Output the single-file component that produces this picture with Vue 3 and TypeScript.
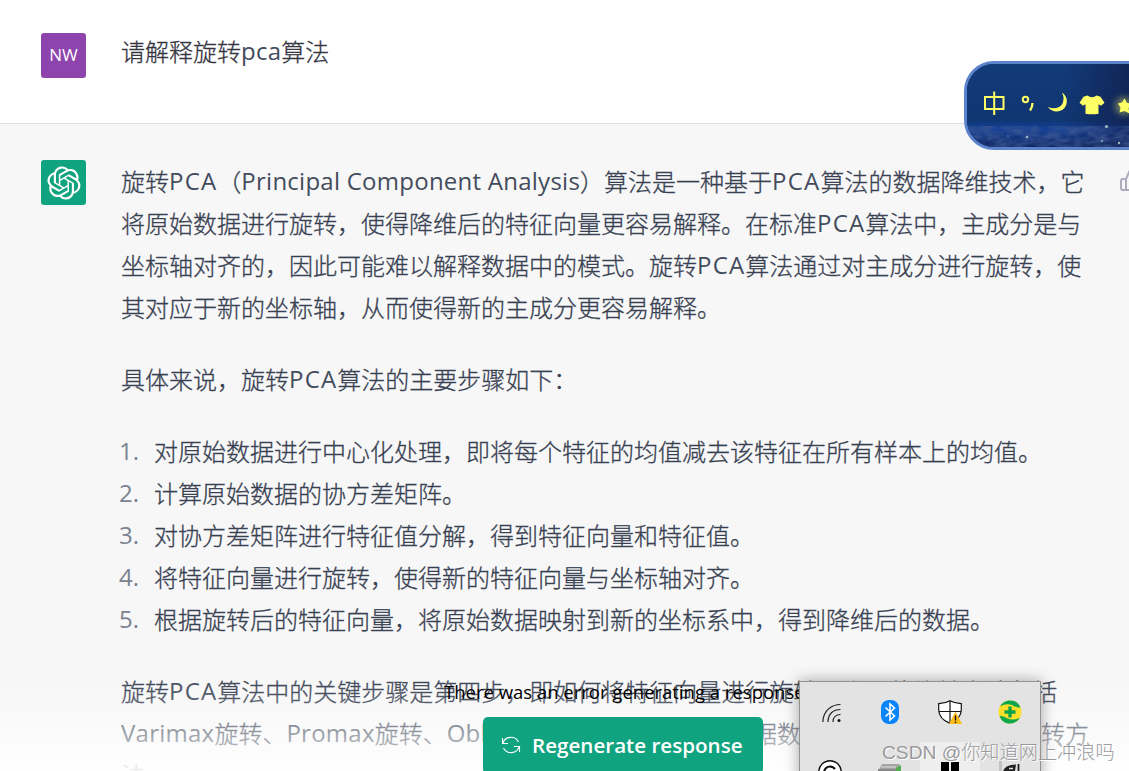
<script setup lang="ts">
interface Run { text: string; kind: string }

const kindOf = (text: string): string => {
  if (!/^[A-Za-z]/.test(text)) return 'han'
  return text === 'PCA' ? 'latin caps' : 'latin'
}

const split = (line: string): Run[] =>
  (line.match(/[A-Za-z][A-Za-z ]*|[^A-Za-z]+/g) ?? []).map((text) => ({ text, kind: kindOf(text) }))

const question = split('请解释旋转pca算法')
const intro = [
  '旋转PCA（Principal Component Analysis）算法是一种基于PCA算法的数据降维技术，它',
  '将原始数据进行旋转，使得降维后的特征向量更容易解释。在标准PCA算法中，主成分是与',
  '坐标轴对齐的，因此可能难以解释数据中的模式。旋转PCA算法通过对主成分进行旋转，使',
  '其对应于新的坐标轴，从而使得新的主成分更容易解释。',
].map(split)
const lead = ['具体来说，旋转PCA算法的主要步骤如下：'].map(split)
const closing = [
  '旋转PCA算法中的关键步骤是第四步，即如何将特征向量进行旋转。常见的旋转方法包括',
  'Varimax旋转、Promax旋转、Oblimin旋转等方法，可以根据数据的特点选择合适的旋转方',
  '法。',
].map(split)
const steps = [
  '对原始数据进行中心化处理，即将每个特征的均值减去该特征在所有样本上的均值。',
  '计算原始数据的协方差矩阵。',
  '对协方差矩阵进行特征值分解，得到特征向量和特征值。',
  '将特征向量进行旋转，使得新的特征向量与坐标轴对齐。',
  '根据旋转后的特征向量，将原始数据映射到新的坐标系中，得到降维后的数据。',
]
</script>

<template>
  <main class="page">
    <section class="row user">
      <div class="avatar purple">NW</div>
      <p class="line question">
        <span v-for="(r, i) in question" :key="i" :class="r.kind">{{ r.text }}</span>
      </p>
    </section>

    <section class="row bot">
      <div class="avatar green">
        <svg width="34" height="34" viewBox="0 0 41 41" fill="#fff">
          <path d="M37.532 16.87a9.963 9.963 0 0 0-.856-8.184 10.078 10.078 0 0 0-10.855-4.835A9.964 9.964 0 0 0 18.306.5a10.079 10.079 0 0 0-9.614 6.977 9.967 9.967 0 0 0-6.664 4.834 10.08 10.08 0 0 0 1.24 11.817 9.965 9.965 0 0 0 .856 8.185 10.079 10.079 0 0 0 10.855 4.835 9.965 9.965 0 0 0 7.516 3.35 10.078 10.078 0 0 0 9.617-6.981 9.967 9.967 0 0 0 6.663-4.834 10.079 10.079 0 0 0-1.243-11.813ZM22.498 37.886a7.474 7.474 0 0 1-4.799-1.735c.061-.033.168-.091.237-.134l7.964-4.6a1.294 1.294 0 0 0 .655-1.134V19.054l3.366 1.944a.12.12 0 0 1 .066.092v9.299a7.505 7.505 0 0 1-7.49 7.496ZM6.392 31.006a7.471 7.471 0 0 1-.894-5.023c.06.036.162.099.237.141l7.964 4.6a1.297 1.297 0 0 0 1.308 0l9.724-5.614v3.888a.12.12 0 0 1-.048.103l-8.051 4.649a7.504 7.504 0 0 1-10.24-2.744ZM4.297 13.62A7.469 7.469 0 0 1 8.2 10.333c0 .068-.004.19-.004.274v9.201a1.294 1.294 0 0 0 .654 1.132l9.723 5.614-3.366 1.944a.12.12 0 0 1-.114.01L7.04 23.856a7.504 7.504 0 0 1-2.743-10.237Zm27.658 6.437-9.724-5.615 3.367-1.943a.121.121 0 0 1 .113-.01l8.052 4.648a7.498 7.498 0 0 1-1.158 13.528v-9.476a1.293 1.293 0 0 0-.65-1.132Zm3.35-5.043c-.059-.037-.162-.099-.236-.141l-7.965-4.6a1.298 1.298 0 0 0-1.308 0l-9.723 5.614v-3.888a.12.12 0 0 1 .048-.103l8.05-4.645a7.497 7.497 0 0 1 11.135 7.763Zm-21.063 6.929-3.367-1.944a.12.12 0 0 1-.065-.092v-9.299a7.497 7.497 0 0 1 12.293-5.756 6.94 6.94 0 0 0-.236.134l-7.965 4.6a1.294 1.294 0 0 0-.654 1.132l-.006 11.225Zm1.829-3.943 4.33-2.501 4.332 2.5v5l-4.331 2.5-4.331-2.5V18Z" />
        </svg>
      </div>
      <div class="answer">
        <div class="para">
          <p v-for="(l, i) in intro" :key="i" class="line">
            <span v-for="(r, j) in l" :key="j" :class="r.kind">{{ r.text }}</span>
          </p>
        </div>
        <div class="para">
          <p v-for="(l, i) in lead" :key="i" class="line">
            <span v-for="(r, j) in l" :key="j" :class="r.kind">{{ r.text }}</span>
          </p>
        </div>
        <ol class="para steps">
          <li v-for="(s, i) in steps" :key="i" class="line">
            <span class="num">{{ i + 1 }}.</span><span class="han">{{ s }}</span>
          </li>
        </ol>
        <div class="para">
          <p v-for="(l, i) in closing" :key="i" class="line">
            <span v-for="(r, j) in l" :key="j" :class="r.kind">{{ r.text }}</span>
          </p>
        </div>
      </div>
      <svg class="thumb" width="24" height="24" viewBox="0 0 24 24" fill="none" stroke="#acacbe" stroke-width="2" stroke-linecap="round" stroke-linejoin="round">
        <path d="M14 9V5a3 3 0 0 0-3-3l-4 9v11h11.3a2 2 0 0 0 2-1.7l1.4-9a2 2 0 0 0-2-2.3zM7 22H4a2 2 0 0 1-2-2v-7a2 2 0 0 1 2-2h3" />
      </svg>
    </section>

    <div class="fade"></div>
    <p class="error">There was an error generating a response</p>
    <button class="regen">
      <svg width="20" height="20" viewBox="0 0 20 20" fill="none" stroke="#fff" stroke-width="1.1">
        <path d="M1.500 3v5.500h5.500M1.800 8.300A8.500 8.500 0 0 1 17.500 7M18.500 17v-5.500H13M18.200 11.700A8.500 8.500 0 0 1 2.500 13" />
      </svg>
      <span>Regenerate response</span>
    </button>

    <aside class="ime">
      <svg width="162" height="83" viewBox="0 0 162 83">
        <defs>
          <linearGradient id="sky" x1="0" y1="0" x2="0" y2="1">
            <stop offset="0" stop-color="#123b79" /><stop offset=".68" stop-color="#103672" />
            <stop offset=".78" stop-color="#13409a" /><stop offset="1" stop-color="#10265f" />
          </linearGradient>
          <linearGradient id="dusk" x1="0" y1="0" x2="1" y2="0">
            <stop offset=".6" stop-color="#111a45" stop-opacity="0" /><stop offset="1" stop-color="#111a45" stop-opacity=".65" />
          </linearGradient>
          <filter id="grass" x="0" y="0" width="1" height="1">
            <feTurbulence type="fractalNoise" baseFrequency=".07 .16" numOctaves="3" seed="4" />
            <feColorMatrix values="0 0 0 0 .04  0 0 0 0 .09  0 0 0 0 .28  1.8 0 0 0 -.45" />
          </filter>
          <filter id="glow" x="-1" y="-1" width="3" height="3"><feGaussianBlur stdDeviation="3" /></filter>
        </defs>
        <rect width="162" height="83" fill="url(#sky)" />
        <rect width="162" height="83" fill="url(#dusk)" />
        <rect y="62" width="162" height="21" filter="url(#grass)" />
        <g fill="#9db4bf"><circle cx="139.500" cy="62.500" r="1.600" /><circle cx="60" cy="73" r="1.300" /><circle cx="135" cy="77" r="1" /><circle cx="152" cy="79" r="1.200" /><circle cx="41" cy="72" r=".7" /></g>
        <g fill="none" stroke="#ffff66" stroke-width="2">
          <path d="M18 33h18.500v12h-18.500zM27.200 27.500v23.500" />
          <circle cx="58.500" cy="35.500" r="2.700" /><path d="M65.500 39q0 4-2.500 7.500" stroke-width="2.300" />
        </g>
        <path d="M95 28.500A10.300 10.300 0 1 1 81 43Q90 46.500 95 40.500 98 34.500 95 28.500Z" fill="#ffff66" />
        <path d="M120.500 31.500q4.500 3.500 9 0l4 1.300 4 6-3.500 3-2.500-1.500v9.500q-6.500 1-13 0v-9.500l-2.500 1.500-3.500-3 4-6z" fill="#ffff66" />
        <circle cx="157" cy="42" r="9" fill="#ffff66" opacity=".4" filter="url(#glow)" />
        <path d="M157.500 34.500l2.500 4.500 5.500 1-4 4 1 5.500-5-2.500-5 1.500 1-5-2.500-4 4-1z" fill="#ffff66" />
      </svg>
    </aside>

    <aside class="tray">
      <div class="cell">
        <svg class="wifi" width="24" height="24" viewBox="0 0 24 24" fill="none" stroke="#222" stroke-width="1.200">
          <path d="M3 22V20C4 11 11 4.500 20.500 4.500M8 22C8 14 13 9.500 20.500 9.500M13 22C13 17 16 14.500 20.500 14.500" /><circle cx="19" cy="20.500" r="1.500" fill="#111" stroke="none" />
        </svg>
      </div>
      <div class="cell">
        <svg width="24" height="24" viewBox="0 0 24 24"><rect x="3" width="18" height="24" rx="8" fill="#0a84fb" /><path d="M7.500 7.500l9 8.500-4.500 4V4l4.500 4-9 8.500" fill="none" stroke="#fff" stroke-width="1.600" /></svg>
      </div>
      <div class="cell">
        <svg width="24" height="24" viewBox="0 0 24 24"><path d="M12 .7Q17 3.500 23.300 3.700V10Q23 19 12 23.400 1 19 .7 10V3.700Q7 3.500 12 .7Z" fill="#fff" stroke="#111" stroke-width="1.200" /><path d="M12 1v22M1 11.500h22" stroke="#111" stroke-width="1.200" /><path d="M17.500 11.500L24 24H11z" fill="#fdbd14" /><path d="M17.500 15.500v5M17.500 21.500v1.500" stroke="#111" stroke-width="1.300" /></svg>
      </div>
      <div class="cell">
        <svg width="24" height="24" viewBox="0 0 24 24"><circle cx="12" cy="12" r="11.500" fill="#fcdf2a" /><path d="M2 6.500A11.500 11.500 0 0 1 20.500 4L22.500 7.500Q17 7.500 14 5 8 3 2 6.500ZM22 17.500A11.500 11.500 0 0 1 3.500 20L1.500 16Q6 15.500 9.500 18.500 16 21 22 17.500Z" fill="#10a64d" /><path d="M12 6.500v11M6.500 12h11" stroke="#0aa04c" stroke-width="3.300" /></svg>
      </div>
      <div class="cell">
        <svg width="24" height="24" viewBox="0 0 24 24"><circle cx="12" cy="12" r="11.300" fill="#fff" stroke="#111" stroke-width="1.400" /><path d="M17 9A6 6 0 1 0 17 16" fill="none" stroke="#111" stroke-width="2.200" /></svg>
      </div>
      <div class="cell">
        <svg width="26" height="24" viewBox="0 0 26 24"><path d="M5 4h18l-3 7H1z" fill="#a4a4a4" /><path d="M1 9h20v14H1z" fill="#888" /><path d="M19 8l5-3v18h-5z" fill="#52ad4e" /><path d="M4 7h15" stroke="#ddd" /></svg>
      </div>
      <div class="cell lit">
        <svg width="20" height="20" viewBox="0 0 20 20"><path d="M1 0h8v9H1zM11 0h8v9h-8zM1 11h8v8H1zM11 11h8v8h-8z" fill="#000" /></svg>
      </div>
      <div class="cell">
        <svg width="24" height="24" viewBox="0 0 24 24"><path d="M1 1h3v23H1z" fill="#c4c4c4" /><path d="M5 12Q6 5 18 4.500L17 11H8z" fill="#222" /><path d="M11 8.500h4" stroke="#e3e3e3" stroke-width="1.500" /><path d="M20.500 4v20" stroke="#222" stroke-width="1.800" /></svg>
      </div>
    </aside>
    <div class="watermark">CSDN @你知道网上冲浪吗</div>
  </main>
</template>

<style>
body { margin: 0; overflow: hidden; }
</style>
<style scoped>
* { box-sizing: border-box; }
.page { position: relative; width: 1129px; height: 771px; overflow: hidden; background: #fff; font-family: "Open Sans", "Noto Sans CJK SC", sans-serif; }
p, ol { margin: 0; padding: 0; }
.row { display: flex; padding-left: 41px; }
.user { height: 124px; border-bottom: 1px solid #dfdfe1; padding-top: 33px; }
.bot { height: 647px; background: #f7f7f8; padding-top: 36px; }
.avatar { flex: none; width: 45px; height: 45px; border-radius: 3px; margin-right: 35px; display: flex; align-items: center; justify-content: center; color: #fff; font-size: 17px; }
.purple { background: #8e44ad; padding-bottom: 2px; }
.green { background: #10a37f; }
.line { height: 42px; line-height: 42px; font-size: 24px; font-weight: 300; font-family: "Noto Sans CJK SC", sans-serif; white-space: nowrap; color: #374151; display: flex; }
.han { -webkit-text-stroke: .3px currentColor; }
.latin { font-family: "Open Sans", sans-serif; font-weight: 400; letter-spacing: .25px; white-space: pre; color: #434c5c; }
.caps { letter-spacing: 1.2px; }
.question { margin-top: -3px; color: #343541; }
.answer { flex: none; width: 998px; display: flex; flex-direction: column; gap: 30px; }
.steps { list-style: none; }
.num { width: 33px; margin-left: -2px; margin-right: 2px; color: #7b8290; font-family: "Open Sans", sans-serif; font-weight: 400; }
.thumb { flex: none; margin: 8px 0 0 0; }
.fade { position: absolute; inset: 671px 0 0; background: linear-gradient(rgba(255,255,255,0), rgba(255,255,255,.1) 25%, rgba(255,255,255,.36) 52%, rgba(255,255,255,.62) 76%, rgba(255,255,255,.92)); }
.error { position: absolute; left: 444px; top: 678px; line-height: 28px; font-size: 18.500px; color: #000; white-space: nowrap; }
.regen { position: absolute; left: 483px; top: 717px; width: 280px; height: 57px; border: 0; border-radius: 5px; background: #10a37f; color: #fff; display: flex; align-items: center; gap: 11px; padding: 0 0 1px 18px; font: 600 20.600px "Open Sans", sans-serif; white-space: nowrap; }
.ime { position: absolute; left: 964px; top: 61px; width: 200px; height: 89px; border: 3px solid #5b83cb; border-radius: 30px; overflow: hidden; background: #12245a; }
.ime svg { display: block; }
.tray { position: absolute; left: 799px; top: 681px; width: 242px; height: 130px; border: 1px solid #929292; background: #e3e3e3; box-shadow: 0 0 14px rgba(0,0,0,.35); display: grid; grid-template-columns: repeat(4, 60px); grid-template-rows: 60px 60px; }
.cell { display: flex; align-items: center; justify-content: center; }
.wifi { margin-left: 3px; }
.lit { background: #eee; }
.watermark { position: absolute; left: 882px; top: 738px; line-height: 30px; font-size: 19.200px; font-family: "Liberation Sans", "Noto Sans CJK SC", sans-serif; font-weight: 300; color: #9a9a9d; text-shadow: 1px 1px 0 #fff; white-space: nowrap; }
</style>
